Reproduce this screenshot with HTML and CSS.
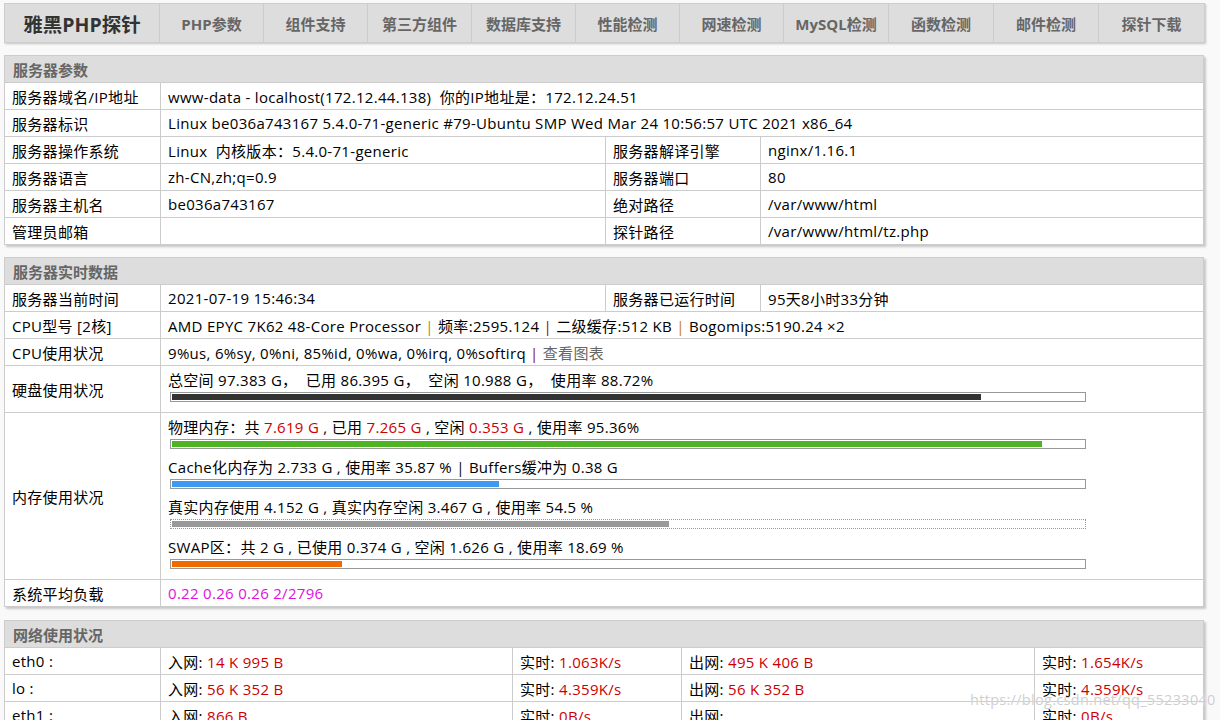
FILE: index.html
```html
<!DOCTYPE html>
<html lang="zh-CN">

<head>
    <meta charset="utf-8" />
    <title>雅黑PHP探针</title>
    <link rel="stylesheet" href="styles.css">
</head>

<body>
    <!-- top menu -->
    <div class="menu">
        <a class="logo" href="#">雅黑PHP探针</a>
        <a class="w104" href="#">PHP参数</a>
        <a class="w104" href="#">组件支持</a>
        <a class="w104" href="#">第三方组件</a>
        <a class="w104" href="#">数据库支持</a>
        <a class="w104" href="#">性能检测</a>
        <a class="w104" href="#">网速检测</a>
        <a class="w105" href="#">MySQL检测</a>
        <a class="w105" href="#">函数检测</a>
        <a class="w105" href="#">邮件检测</a>
        <a class="w105 last" href="#">探针下载</a>
    </div>

    <!-- server info -->
    <table class="box">
        <colgroup>
            <col class="c1"><col class="c2"><col class="c3"><col>
        </colgroup>
        <tr><th colspan="4">服务器参数</th></tr>
        <tr>
            <td>服务器域名/IP地址</td>
            <td colspan="3">www-data - localhost(172.12.44.138)&nbsp; 你的IP地址是：172.12.24.51</td>
        </tr>
        <tr>
            <td>服务器标识</td>
            <td colspan="3">Linux be036a743167 5.4.0-71-generic #79-Ubuntu SMP Wed Mar 24 10:56:57 UTC 2021 x86_64</td>
        </tr>
        <tr>
            <td>服务器操作系统</td>
            <td>Linux &nbsp;内核版本：5.4.0-71-generic</td>
            <td>服务器解译引擎</td>
            <td>nginx/1.16.1</td>
        </tr>
        <tr>
            <td>服务器语言</td>
            <td>zh-CN,zh;q=0.9</td>
            <td>服务器端口</td>
            <td>80</td>
        </tr>
        <tr>
            <td>服务器主机名</td>
            <td>be036a743167</td>
            <td>绝对路径</td>
            <td>/var/www/html</td>
        </tr>
        <tr>
            <td>管理员邮箱</td>
            <td></td>
            <td>探针路径</td>
            <td>/var/www/html/tz.php</td>
        </tr>
    </table>

    <!-- realtime data -->
    <table class="box">
        <colgroup>
            <col class="c1"><col class="c2"><col class="c3"><col>
        </colgroup>
        <tr><th colspan="4">服务器实时数据</th></tr>
        <tr>
            <td>服务器当前时间</td>
            <td>2021-07-19 15:46:34</td>
            <td>服务器已运行时间</td>
            <td>95天8小时33分钟</td>
        </tr>
        <tr>
            <td>CPU型号 [2核]</td>
            <td colspan="3">AMD EPYC 7K62 48-Core Processor <span class="sep1">|</span> 频率:2595.124 <span class="sep2">|</span> 二级缓存:512 KB <span class="sep1">|</span> Bogomips:5190.24 ×2</td>
        </tr>
        <tr>
            <td>CPU使用状况</td>
            <td colspan="3">9%us, 6%sy, 0%ni, 85%id, 0%wa, 0%irq, 0%softirq <span class="sep2">|</span> <a class="chart" href="#">查看图表</a></td>
        </tr>
        <tr class="disk">
            <td>硬盘使用状况</td>
            <td colspan="3">
                <div class="line">总空间 97.383 G，&nbsp;&nbsp;已用 86.395 G，&nbsp;&nbsp;空闲 10.988 G，&nbsp;&nbsp;使用率 88.72%</div>
                <div class="bar"><div class="fill dark" style="width: 88.72%"></div></div>
            </td>
        </tr>
        <tr class="mem">
            <td>内存使用状况</td>
            <td colspan="3">
                <div class="item">
                    <div class="line">物理内存：共 <span class="red">7.619 G</span> , 已用 <span class="red">7.265 G</span> , 空闲 <span class="red">0.353 G</span> , 使用率 95.36%</div>
                    <div class="bar"><div class="fill green" style="width: 95.36%"></div></div>
                </div>
                <div class="item">
                    <div class="line">Cache化内存为 2.733 G , 使用率 35.87 % | Buffers缓冲为 0.38 G</div>
                    <div class="bar"><div class="fill blue" style="width: 35.87%"></div></div>
                </div>
                <div class="item">
                    <div class="line">真实内存使用 4.152 G , 真实内存空闲 3.467 G , 使用率 54.5 %</div>
                    <div class="bar dotted"><div class="fill gray" style="width: 54.5%"></div></div>
                </div>
                <div class="item">
                    <div class="line">SWAP区：共 2 G , 已使用 0.374 G , 空闲 1.626 G , 使用率 18.69 %</div>
                    <div class="bar"><div class="fill orange" style="width: 18.69%"></div></div>
                </div>
            </td>
        </tr>
        <tr>
            <td>系统平均负载</td>
            <td colspan="3" class="load">0.22 0.26 0.26 2/2796</td>
        </tr>
    </table>

    <!-- network -->
    <table class="box net">
        <colgroup>
            <col class="n1"><col class="n2"><col class="n3"><col class="n4"><col>
        </colgroup>
        <tr><th colspan="5">网络使用状况</th></tr>
        <tr>
            <td>eth0 :</td>
            <td>入网: <span class="red">14 K 995 B</span></td>
            <td>实时: <span class="red">1.063K/s</span></td>
            <td>出网: <span class="red">495 K 406 B</span></td>
            <td>实时: <span class="red">1.654K/s</span></td>
        </tr>
        <tr>
            <td>lo :</td>
            <td>入网: <span class="red">56 K 352 B</span></td>
            <td>实时: <span class="red">4.359K/s</span></td>
            <td>出网: <span class="red">56 K 352 B</span></td>
            <td>实时: <span class="red">4.359K/s</span></td>
        </tr>
        <tr>
            <td>eth1 :</td>
            <td>入网: <span class="red">866 B</span></td>
            <td>实时: <span class="red">0B/s</span></td>
            <td>出网: <span class="red"></span></td>
            <td>实时: <span class="red">0B/s</span></td>
        </tr>
    </table>

    <div class="mark">https://blog.csdn.net/qq_55233040</div>
</body>

</html>
```

FILE: styles.css
```css
* {
    font-family: "Open Sans", "Noto Sans CJK SC", sans-serif;
}

body {
    margin: 3px 4px;
    background: #f9f9f9;
    font-size: 15px;
    letter-spacing: 0.3px;
    color: #000;
}

a {
    text-decoration: none;
}

/* menu bar */
.menu {
    display: flex;
    width: 1199px;
    height: 38px;
    background: #dddddd;
    border: 1px solid #cccccc;
    box-shadow: 1px 1px 2px #c4c4c4;
}

.menu a {
    display: flex;
    align-items: center;
    justify-content: center;
    height: 38px;
    border-right: 1px solid #cccccc;
    color: #666;
    font-weight: bold;
    font-size: 15px;
    letter-spacing: 0;
}

.menu a.logo {
    width: 154px;
    color: #333;
    font-size: 19.5px;
}

.menu a.w104 {
    width: 103px;
}

.menu a.w105 {
    width: 104px;
}

.menu a.last {
    border-right: 0;
    flex: 1;
}

/* tables */
.box {
    width: 1200px;
    margin-top: 12px;
    border-collapse: collapse;
    border: 1px solid #cccccc;
    background: #fff;
    box-shadow: 2px 2px 2px #c8c8c8;
    table-layout: fixed;
}

.box.net {
    margin-top: 13px;
}

.box th {
    height: 26px;
    padding: 0 8px;
    background: #dddddd;
    color: #666;
    font-weight: bold;
    text-align: left;
    border-bottom: 1px solid #cccccc;
    letter-spacing: 0;
}

.box td {
    height: 26px;
    padding: 0 7px;
    border: 1px solid #cccccc;
    white-space: nowrap;
}

col.c1 { width: 156px; }
col.c2 { width: 445px; }
col.c3 { width: 155px; }

col.n1 { width: 156px; }
col.n2 { width: 352px; }
col.n3 { width: 169px; }
col.n4 { width: 353px; }

.sep1 { color: #c47f0a; }
.sep2 { color: #8b0a2a; }

.chart {
    color: #666;
}

.red {
    color: #cc0000;
}

.load {
    color: #e010e0;
}

/* usage bars */
.line {
    height: 20px;
    line-height: 20px;
}

.bar {
    width: 912px;
    height: 6px;
    padding: 1px;
    margin: 2px 0 0 2px;
    border: 1px solid #999;
}

.bar.dotted {
    border-style: dotted;
}

.fill {
    height: 6px;
}

.fill.dark { background: #333333; }
.fill.green { background: #4fb423; }
.fill.blue { background: #3c9af0; }
.fill.gray { background: #999999; }
.fill.orange { background: #f06a00; }

.disk td {
    height: 46px;
}

.disk td + td {
    vertical-align: top;
    padding-top: 4px;
    height: 42px;
}

.mem td + td {
    vertical-align: top;
    padding-top: 4px;
    padding-bottom: 2px;
}

.mem .item {
    height: 40px;
}

.mark {
    position: absolute;
    left: 970px;
    top: 690px;
    font-size: 14.5px;
    color: rgba(190, 190, 190, 0.75);
    text-shadow: 0 0 1px #fff;
}
```
